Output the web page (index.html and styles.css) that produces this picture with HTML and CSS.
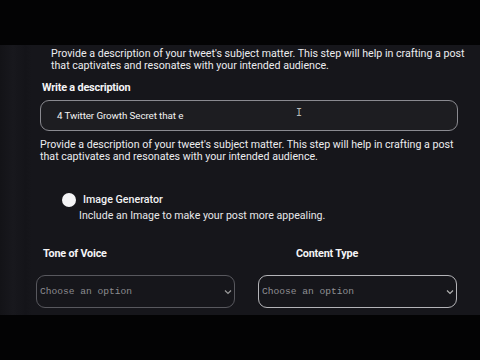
FILE: index.html
```html
<!DOCTYPE html>
<html>
<head>
<meta charset="utf-8">
<link rel="stylesheet" href="styles.css">
</head>
<body>
<div class="bar"></div>
<div class="frame">
  <div class="strip"></div>
  <div class="content">
    <p class="desc top">Provide a description of your tweet's subject matter. This step will help in crafting a post<br>that captivates and resonates with your intended audience.</p>
    <div class="label">Write a description</div>
    <div class="input"><span>4 Twitter Growth Secret that e</span><span class="ibeam">I</span></div>
    <p class="desc second">Provide a description of your tweet's subject matter. This step will help in crafting a post<br>that captivates and resonates with your intended audience.</p>
    <div class="toggle">
      <div class="dot"></div>
      <div class="toggle-text">
        <div class="toggle-title">Image Generator</div>
        <div class="toggle-sub">Include an Image to make your post more appealing.</div>
      </div>
    </div>
    <div class="selects">
      <div class="field">
        <div class="label sel-label">Tone of Voice</div>
        <div class="select"><span>Choose an option</span><svg width="8" height="6" viewBox="0 0 8 6"><path d="M1 1.5 L4 4.5 L7 1.5" fill="none" stroke="#9a9a9a" stroke-width="1.2"/></svg></div>
      </div>
      <div class="field">
        <div class="label sel-label second-label">Content Type</div>
        <div class="select active"><span>Choose an option</span><svg width="8" height="6" viewBox="0 0 8 6"><path d="M1 1.5 L4 4.5 L7 1.5" fill="none" stroke="#b0b0b0" stroke-width="1.2"/></svg></div>
      </div>
    </div>
  </div>
</div>
<div class="bar bottom"></div>
</body>
</html>
```
FILE: styles.css
```css
html, body {
  margin: 0;
  padding: 0;
  background: #030304;
  width: 480px;
  height: 360px;
  overflow: hidden;
  font-family: Roboto, "Noto Sans", sans-serif;
}
.bar {
  height: 45px;
  background: #030304;
}
.frame {
  height: 270px;
  background: #16161b;
  display: flex;
  overflow: hidden;
}
.strip {
  width: 32px;
  background: linear-gradient(90deg, #131317 0%, #18181d 40%, #141419 80%, #16161b 100%);
  flex: none;
}
.content {
  flex: 1;
  padding-left: 8px;
  color: #f0f0f2;
}
.desc {
  margin: 0;
  font-size: 10.65px;
  line-height: 12px;
  color: #ececef;
  white-space: nowrap;
}
.top {
  padding-left: 11px;
  margin-top: 3px;
}
.label {
  font-weight: 700;
  font-size: 10.9px;
  margin-top: 9px;
  padding-left: 2px;
  letter-spacing: -0.2px;
  color: #f4f4f6;
}
.input {
  margin-top: 6px;
  width: 418px;
  height: 31px;
  box-sizing: border-box;
  border: 1px solid #8a8a90;
  border-radius: 9px;
  background: #1d1d21;
  display: flex;
  align-items: center;
  padding-left: 16px;
  font-size: 9.8px;
  color: #f2f2f2;
  letter-spacing: -0.1px;
  position: relative;
}
.ibeam {
  position: absolute;
  left: 255px;
  top: 6px;
  font-size: 10px;
  color: #b8b8b8;
  font-family: "DejaVu Sans Mono", monospace;
}
.second {
  margin-top: 8px;
}
.toggle {
  display: flex;
  margin-top: 29px;
  padding-left: 22px;
  gap: 7px;
}
.dot {
  width: 14px;
  height: 14px;
  border-radius: 50%;
  background: #f4f4f6;
  margin-top: 1px;
  flex: none;
}
.toggle-title {
  font-size: 10.7px;
  font-weight: 500;
  line-height: 15px;
  color: #f2f2f4;
}
.toggle-sub {
  font-size: 10.6px;
  margin-top: 2px;
  margin-left: -4px;
  color: #e8e8ea;
}
.selects {
  display: flex;
  gap: 23px;
  margin-top: 25px;
  margin-left: -4px;
}
.field {
  width: 199px;
}
.sel-label {
  margin-top: 0;
  padding-left: 7px;
  font-size: 10.8px;
}
.second-label {
  padding-left: 38px;
}
.select {
  margin-top: 15px;
  height: 33px;
  box-sizing: border-box;
  border: 1px solid #58585e;
  border-radius: 9px;
  display: flex;
  align-items: center;
  justify-content: space-between;
  padding: 0 2px 0 3px;
  font-family: "Liberation Mono", monospace;
  font-size: 9.6px;
  color: #8c8c90;
}
.select.active {
  border-color: #b4b4b8;
  color: #909094;
}
.bottom {
  height: 45px;
}
```
